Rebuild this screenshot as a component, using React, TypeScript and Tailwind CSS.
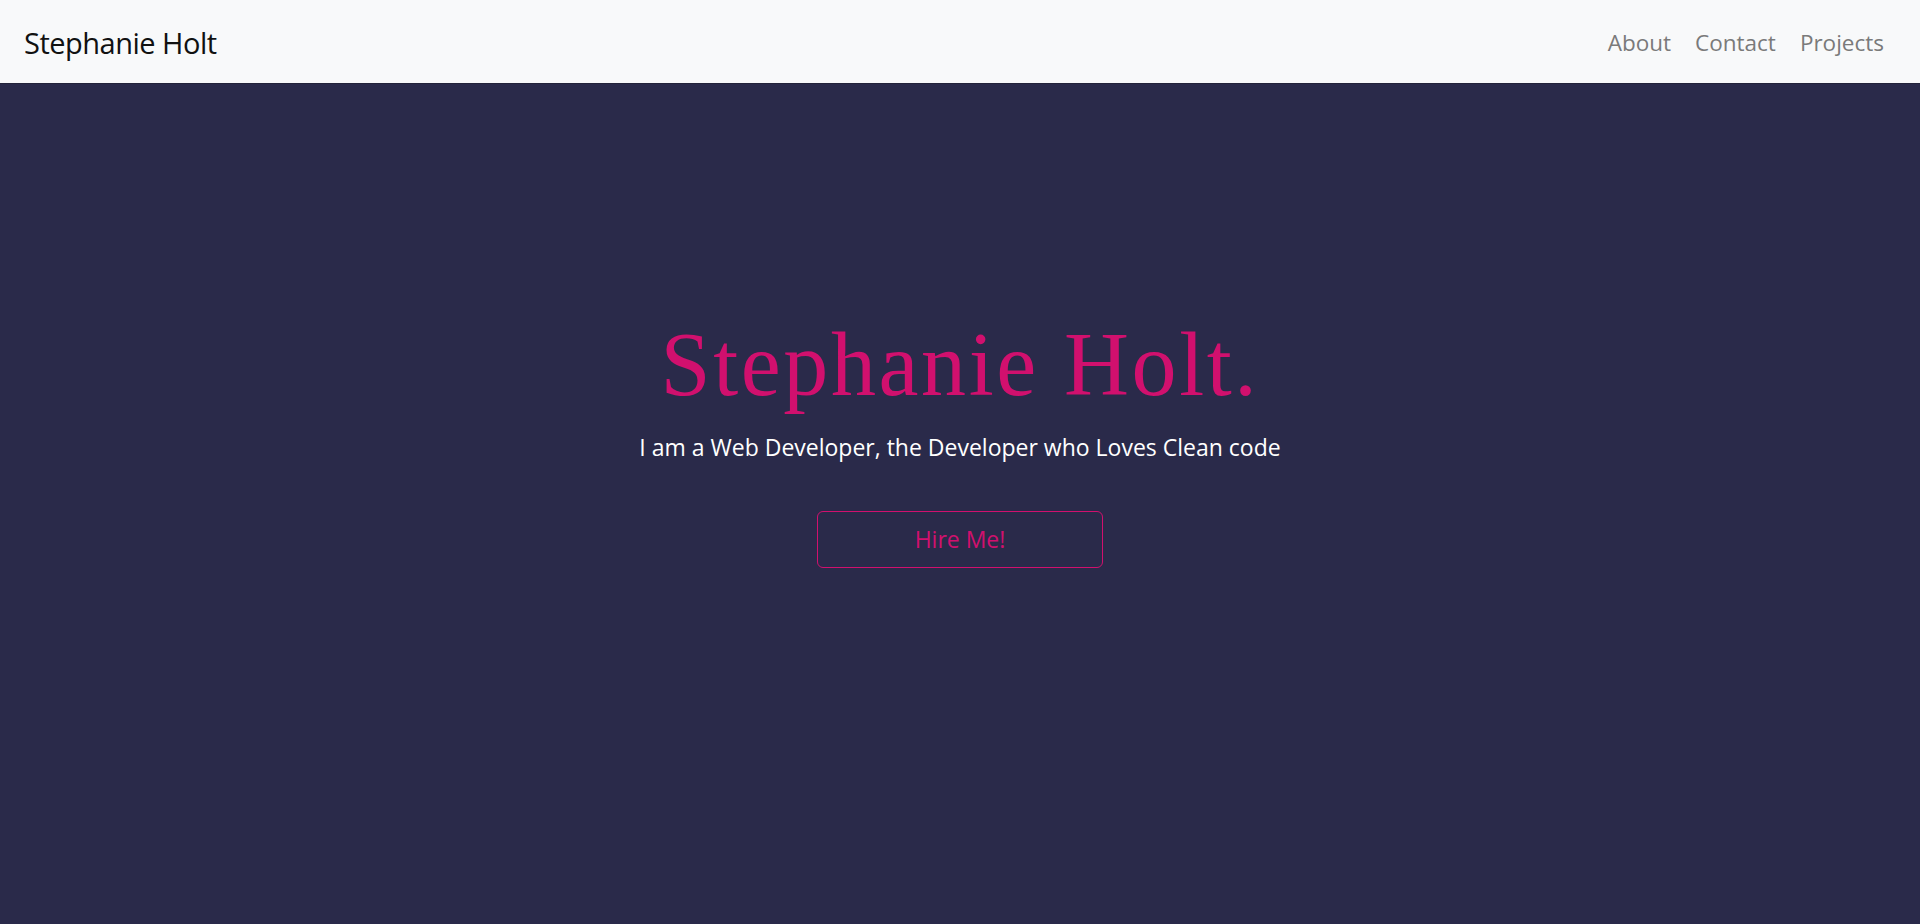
export default function App() {
  return (
    <div className="min-h-screen flex flex-col bg-[#2a2a4a]">
      {/* Navbar */}
      <nav className="h-[84px] bg-[#f8f9fa] flex items-center justify-between px-6 pt-[2px] border-b border-[#23233a]">
        <a className="text-[29px] text-[#111] font-['Open_Sans',sans-serif] tracking-[-0.5px]">Stephanie Holt</a>
        <ul className="flex items-center font-['Open_Sans',sans-serif] text-[22.5px] text-[#7a7a7a]">
          <li className="px-3">About</li>
          <li className="px-3">Contact</li>
          <li className="px-3">Projects</li>
        </ul>
      </nav>

      {/* Hero */}
      <section className="flex-1 flex flex-col items-center pt-[227px]">
        <h1 className="text-[90px] leading-[1.2] tracking-[2.6px] text-[#d1106e] font-['Liberation_Serif',serif]">
          Stephanie Holt.
        </h1>
        <p className="mt-[11px] text-[23px] text-white font-['Open_Sans',sans-serif]">
          I am a Web Developer, the Developer who Loves Clean code
        </p>
        <button className="mt-[46px] w-[286px] h-[57px] rounded-[6px] border border-[#d1106e] text-[#d1106e] text-[23px] font-['Open_Sans',sans-serif]">
          Hire Me!
        </button>
      </section>
    </div>
  );
}
